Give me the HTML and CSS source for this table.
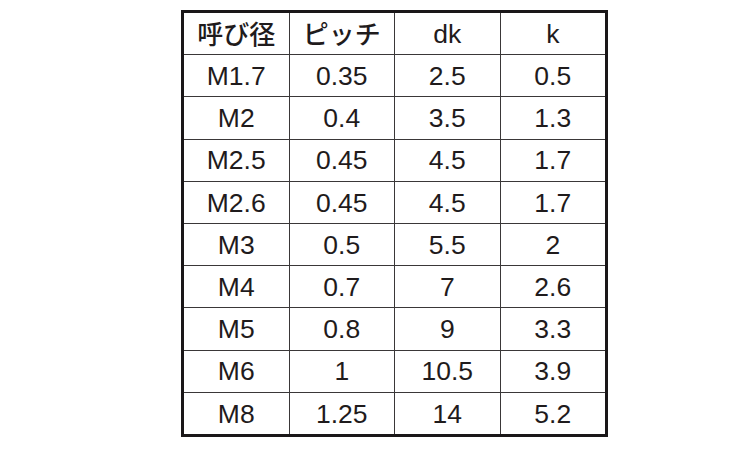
FILE: index.html
```html
<!DOCTYPE html>
<html lang="ja">
<head>
<meta charset="utf-8">
<title>寸法表</title>
<link rel="stylesheet" href="styles.css">
</head>
<body>
<div class="page">
  <div class="spec">
    <div class="cell head">呼び径</div><div class="cell head">ピッチ</div><div class="cell">dk</div><div class="cell">k</div>
    <div class="cell">M1.7</div><div class="cell">0.35</div><div class="cell">2.5</div><div class="cell">0.5</div>
    <div class="cell">M2</div><div class="cell">0.4</div><div class="cell">3.5</div><div class="cell">1.3</div>
    <div class="cell">M2.5</div><div class="cell">0.45</div><div class="cell">4.5</div><div class="cell">1.7</div>
    <div class="cell">M2.6</div><div class="cell">0.45</div><div class="cell">4.5</div><div class="cell">1.7</div>
    <div class="cell">M3</div><div class="cell">0.5</div><div class="cell">5.5</div><div class="cell">2</div>
    <div class="cell">M4</div><div class="cell">0.7</div><div class="cell">7</div><div class="cell">2.6</div>
    <div class="cell">M5</div><div class="cell">0.8</div><div class="cell">9</div><div class="cell">3.3</div>
    <div class="cell">M6</div><div class="cell">1</div><div class="cell">10.5</div><div class="cell">3.9</div>
    <div class="cell">M8</div><div class="cell">1.25</div><div class="cell">14</div><div class="cell">5.2</div>
  </div>
</div>
</body>
</html>
```
FILE: styles.css
```css
html, body {
  margin: 0;
  padding: 0;
  background: #ffffff;
}
.page {
  width: 750px;
  height: 450px;
  box-sizing: border-box;
  padding: 10px 0 0 181px;
}
.spec {
  width: 421px;
  height: 421px;
  border: 3px solid #1a1718;
  background: #3a3738;
  display: grid;
  grid-template-columns: repeat(4, 1fr);
  grid-template-rows: repeat(10, 1fr);
  gap: 1px;
}
.cell {
  background: #ffffff;
  display: flex;
  align-items: center;
  justify-content: center;
  font-family: "Liberation Sans", Arial, sans-serif;
  font-size: 26.5px;
  color: #1f1b1c;
  line-height: 1;
  padding-top: 1px;
}
.head {
  font-family: "Noto Sans CJK JP", "Liberation Sans", sans-serif;
  font-size: 26px;
  font-weight: 500;
  padding-top: 0;
  padding-bottom: 2px;
}
```
